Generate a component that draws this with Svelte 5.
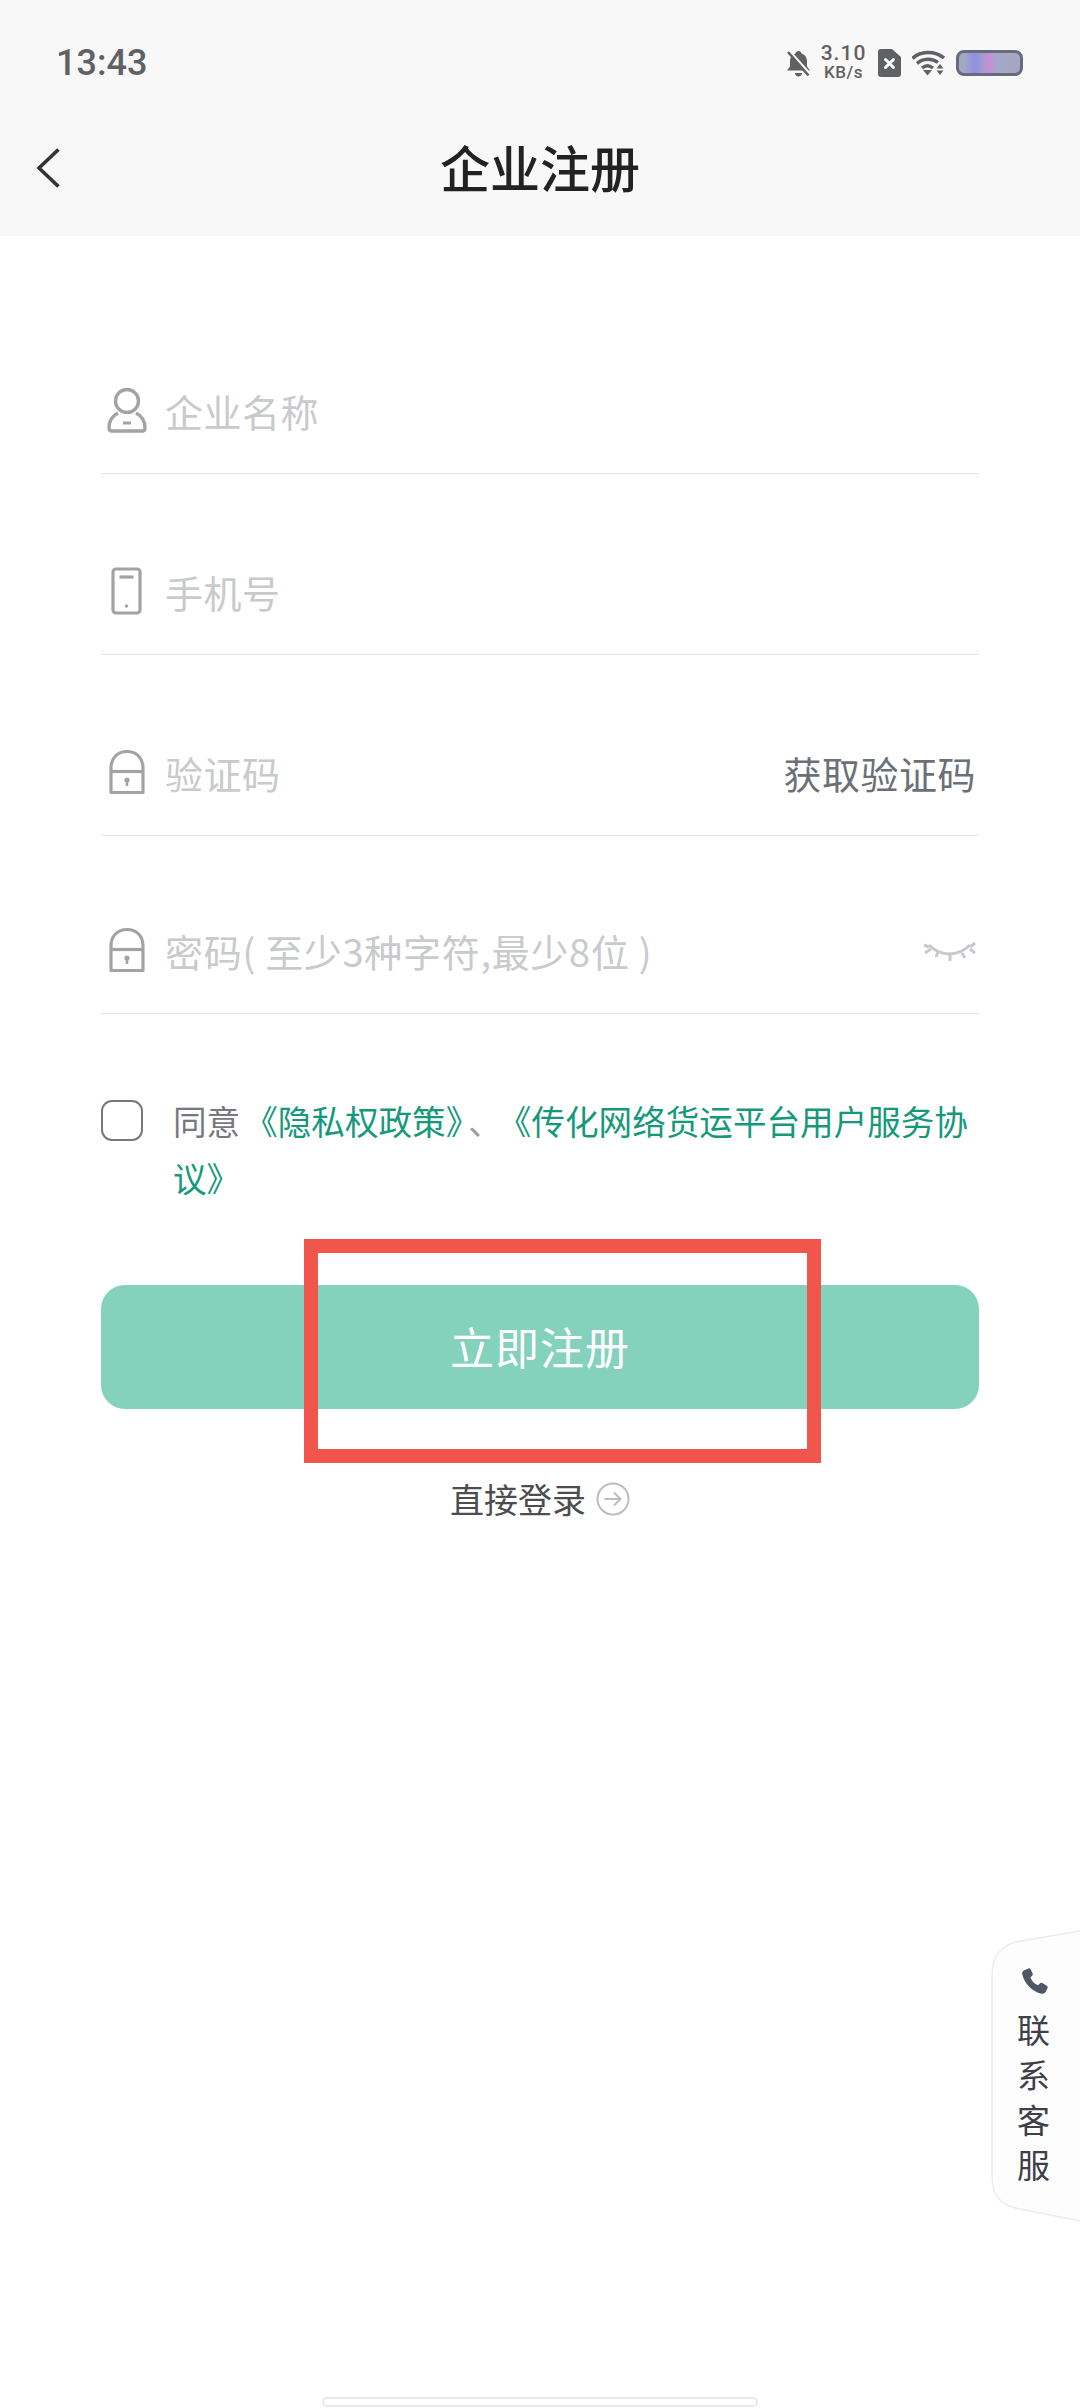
<script>
  const fields = [
    { label: '企业名称', icon: 'user', cls: '' },
    { label: '手机号', icon: 'phone', cls: '' },
    { label: '验证码', icon: 'lock', cls: '', action: '获取验证码' },
    { label: '密码( 至少3种字符,最少8位 )', icon: 'lock', cls: 'short', eye: true }
  ];
</script>

<div class="page">
  <header class="top">
    <div class="status">
      <span class="time">13:43</span>
      <div class="status-icons">
        <svg class="bell" viewBox="0 0 23 27" width="23" height="27">
          <path d="M11.5 1c1.600 0 2.700 1 3 2.400 3.700 1.100 5.500 4.200 5.500 8v5l3 4H0l3-4v-5c0-3.800 1.800-6.900 5.500-8C8.800 2 9.900 1 11.500 1zM8 23h7c0 2-1.500 3.500-3.500 3.500S8 25 8 23z" fill="#5f6163"/>
          <path d="M2.500 1 23 24" stroke="#f7f7f8" stroke-width="2.500"/>
          <path d="M1 2 21.500 25.500" stroke="#5f6163" stroke-width="2.600"/>
        </svg>
        <div class="speed"><span class="num">3.10</span><span class="unit">KB/s</span></div>
        <svg class="sim" viewBox="0 0 23 28" width="23" height="28">
          <path d="M3 0h11l9 8v17a3 3 0 0 1-3 3H3a3 3 0 0 1-3-3V3a3 3 0 0 1 3-3z" fill="#5f6163"/>
          <path d="M7.500 10.500 15.500 18.500M15.500 10.500 7.500 18.500" stroke="#fff" stroke-width="3" stroke-linecap="round"/>
        </svg>
        <svg class="wifi" viewBox="0 0 33 26" width="33" height="26" fill="none" stroke="#5f6163" stroke-width="3.400">
          <path d="M.5 8.500C8 .5 23 .5 32 8"/>
          <path d="M5 13.500C11 8 20 8 26 12.500"/>
          <path d="M10 18c3.300-2.800 7.500-2.800 11 0"/>
          <path d="M11 20h9l-4.500 5.500z" fill="#5f6163" stroke="none"/>
          <path d="M28 14l3.500 4.500h-7zM24.500 20.500h7l-3.500 4.500z" fill="#5f6163" stroke="none"/>
        </svg>
        <div class="battery"></div>
      </div>
    </div>
    <div class="nav">
      <svg class="back" viewBox="0 0 24 40" width="24" height="40" fill="none" stroke="#333" stroke-width="3.600">
        <path d="M22.500 1.500 3 20l19.500 18.500"/>
      </svg>
      <h1>企业注册</h1>
    </div>
  </header>

  <main class="form">
    {#each fields as f}
      <div class="field {f.cls}">
        {#if f.icon === 'user'}
          <svg class="ico" viewBox="0 0 40 46" width="40" height="46" fill="none" stroke="#a3a3a3" stroke-width="3.400">
            <circle cx="20" cy="14" r="11.500"/>
            <path d="M11 26C5 29 2 35 2 41c0 2 1 3 3 3h30c2 0 3-1 3-3 0-6-3-12-9-15"/>
            <path d="M16 36h8" stroke-width="3"/>
          </svg>
        {:else if f.icon === 'phone'}
          <svg class="ico" viewBox="0 0 40 48" width="40" height="48" fill="none" stroke="#a3a3a3" stroke-width="3.200">
            <rect x="6" y="2" width="27" height="44" rx="3"/>
            <path d="M12.500 10h14"/>
            <circle cx="19.500" cy="39" r="1.800" fill="#a3a3a3" stroke="none"/>
          </svg>
        {:else}
          <svg class="ico" viewBox="0 0 40 46" width="40" height="46" fill="none" stroke="#a3a3a3" stroke-width="3.200">
            <path d="M4 43.500V19C4 9 10.500 2.500 20 2.500S36 9 36 19v24.500z" stroke-linejoin="round"/>
            <path d="M4 22.500h32"/>
            <circle cx="20" cy="31" r="2.600" fill="#a3a3a3" stroke="none"/>
            <path d="M20 31v6" stroke-width="2.600"/>
          </svg>
        {/if}
        <span class="ph">{f.label}</span>
        {#if f.action}
          <span class="action">{f.action}</span>
        {/if}
        {#if f.eye}
          <svg class="eye" viewBox="0 0 54 24" width="54" height="24" fill="none" stroke="#c6c9ce" stroke-width="3">
            <path d="M6 5c6 6 13 9 20 9s15-3 21-9"/>
            <path d="M1 5l5 2M2 13l6-4M15 12l-2 5M27 15v6M39 13l3 5M47 9l5 4M52 3l-5 4"/>
          </svg>
        {/if}
      </div>
    {/each}

    <div class="consent">
      <span class="box"></span>
      <div class="terms">
        <p><span class="agree">同意</span><a href="#a">《隐私权政策<span class="tight">》</span></a><span class="sep">、</span><a href="#b">《传化网络货运平台用户服务协</a></p>
        <p><a href="#b">议》</a></p>
      </div>
    </div>

    <button class="submit">立即注册</button>

    <div class="login">
      <span>直接登录</span>
      <svg viewBox="0 0 34 34" width="34" height="34" fill="none" stroke="#bdbdbd" stroke-width="2">
        <circle cx="17" cy="17" r="15.500"/>
        <path d="M8.500 17h16M18 10.500l6.500 6.500-6.500 6.500"/>
      </svg>
    </div>
  </main>

  <div class="mark"></div>

  <aside class="contact">
    <svg class="tab" viewBox="0 0 89 292" width="89" height="292" fill="#fdfdfe" stroke="#ececee" stroke-width="1.500">
      <path d="M89 1 30 11C12 14 1 25 1 45v202c0 20 10 29 28 32l60 12"/>
    </svg>
    <svg class="tel" viewBox="0 0 26 26" width="26" height="26">
      <path d="M6.500.5 1.800 2.500C.5 3.200 0 4.500.3 6.200 2 15 10 23.500 19.500 25.700c1.800.4 3.100-.3 4-1.600l2-3.800c.5-1 .2-1.900-.7-2.500l-4.500-2.800c-.9-.6-1.800-.4-2.500.4l-1.600 1.900C12.500 16 9.500 12.500 8.400 9.400l1.700-1.700c.7-.7.9-1.500.4-2.400L8.600 1.300C8.100.4 7.400.1 6.500.5z" fill="#4f5666"/>
    </svg>
    <span class="ct">联</span>
    <span class="ct">系</span>
    <span class="ct">客</span>
    <span class="ct">服</span>
  </aside>

  <div class="home"></div>
</div>

<style>
  :global(body) {
    margin: 0;
    background: #fff;
  }
  .page {
    position: relative;
    width: 1080px;
    height: 2408px;
    overflow: hidden;
    background: #fff;
    font-family: "Noto Sans CJK SC", "Noto Sans", sans-serif;
  }
  .top {
    height: 236px;
    background: #f8f8f9;
    display: flex;
    flex-direction: column;
  }
  .status {
    height: 126px;
    padding: 0 57px 0 56px;
    display: flex;
    justify-content: space-between;
    align-items: center;
    box-sizing: border-box;
  }
  .time {
    font-family: Roboto, sans-serif;
    font-weight: 500;
    font-size: 36px;
    color: #5f6163;
  }
  .status-icons {
    display: flex;
    align-items: center;
  }
  .bell { margin-right: 12px; }
  .speed {
    display: flex;
    flex-direction: column;
    align-items: center;
    width: 43px;
    margin-right: 13px;
    font-family: Roboto, sans-serif;
    font-weight: 500;
    color: #5f6163;
    line-height: 19px;
  }
  .num { font-size: 21px; letter-spacing: 1px; }
  .unit { font-size: 17px; letter-spacing: 0.5px; }
  .sim { margin-right: 11px; }
  .wifi { margin-right: 11px; }
  .battery {
    box-sizing: border-box;
    width: 67px;
    height: 26px;
    border: 3px solid #666b80;
    border-radius: 8px;
    background: linear-gradient(90deg, #a3a7c4 0 10%, #8f8fe6 25%, #a09ccf 38%, #c78ed6 50%, #a8a6c8 62%, #a3a7c2 100%);
  }
  .nav {
    position: relative;
    flex: 1;
    display: flex;
    align-items: center;
    justify-content: center;
    margin-top: -30px;
  }
  .back {
    position: absolute;
    left: 36px;
    top: 52px;
  }
  h1 {
    margin: 0;
    font-size: 50px;
    font-weight: 500;
    line-height: 70px;
    color: #222;
  }
  .form {
    padding: 56px 101px 0;
    display: flex;
    flex-direction: column;
  }
  .field {
    height: 118px;
    padding-bottom: 4px;
    margin-top: 59px;
    display: flex;
    align-items: center;
    border-bottom: 1px solid #e3e4e6;
    margin-bottom: -1px;
  }
  .field.short { margin-top: 56px; }
  .ico { flex: none; margin-left: 6px; margin-right: 18px; }
  .ph {
    font-size: 38px;
    letter-spacing: 0.5px;
    color: #c8cacc;
    white-space: nowrap;
  }
  .short .ph { letter-spacing: 0.7px; }
  .action {
    margin-left: auto;
    font-size: 38px;
    letter-spacing: 0.5px;
    color: #6b7078;
    margin-right: 3px;
  }
  .eye { margin-left: auto; margin-right: 2px; margin-top: 4px; }
  .consent {
    margin-top: 79px;
    display: flex;
    align-items: flex-start;
  }
  .box {
    flex: none;
    box-sizing: border-box;
    width: 42px;
    height: 41px;
    margin-top: 8px;
    margin-right: 30px;
    border: 2px solid #77797c;
    border-radius: 11px;
  }
  .terms p {
    margin: 0;
    font-size: 33.6px;
    line-height: 57px;
    white-space: nowrap;
    color: #77797c;
    text-spacing-trim: space-all;
    font-feature-settings: "chws" 0, "palt" 0;
  }
  .terms a {
    color: #16997a;
    text-decoration: none;
  }
  .agree { margin-right: 4px; }
  .tight { letter-spacing: -11px; }
  .sep { color: #9a9c9e; letter-spacing: -4px; }
  .submit {
    margin-top: 79px;
    height: 124px;
    border: 0;
    border-radius: 24px;
    background: #84d2bb;
    color: #fff;
    font-family: inherit;
    font-size: 44px;
    letter-spacing: 1px;
    padding: 0 0 2px;
  }
  .login {
    margin-top: 70px;
    display: flex;
    align-items: center;
    justify-content: center;
    gap: 10px;
    font-size: 34px;
    line-height: 40px;
    color: #4b4d50;
  }
  .mark {
    position: absolute;
    left: 304px;
    top: 1239px;
    width: 517px;
    height: 224px;
    box-sizing: border-box;
    border: 14px solid #f0564c;
  }
  .contact {
    position: absolute;
    left: 991px;
    top: 1930px;
    width: 89px;
    height: 292px;
    display: flex;
    flex-direction: column;
    align-items: center;
  }
  .tab { position: absolute; left: 0; top: 0; }
  .tel { position: relative; margin-top: 38px; margin-bottom: 13px; margin-left: -2px; }
  .ct {
    position: relative;
    left: -2px;
    font-size: 33px;
    line-height: 45px;
    color: #3d4046;
  }
  .home {
    position: absolute;
    left: 322px;
    top: 2397px;
    width: 436px;
    height: 10px;
    box-sizing: border-box;
    border: 2px solid #e8e8e8;
    border-radius: 5px;
    background: #fff;
  }
</style>
